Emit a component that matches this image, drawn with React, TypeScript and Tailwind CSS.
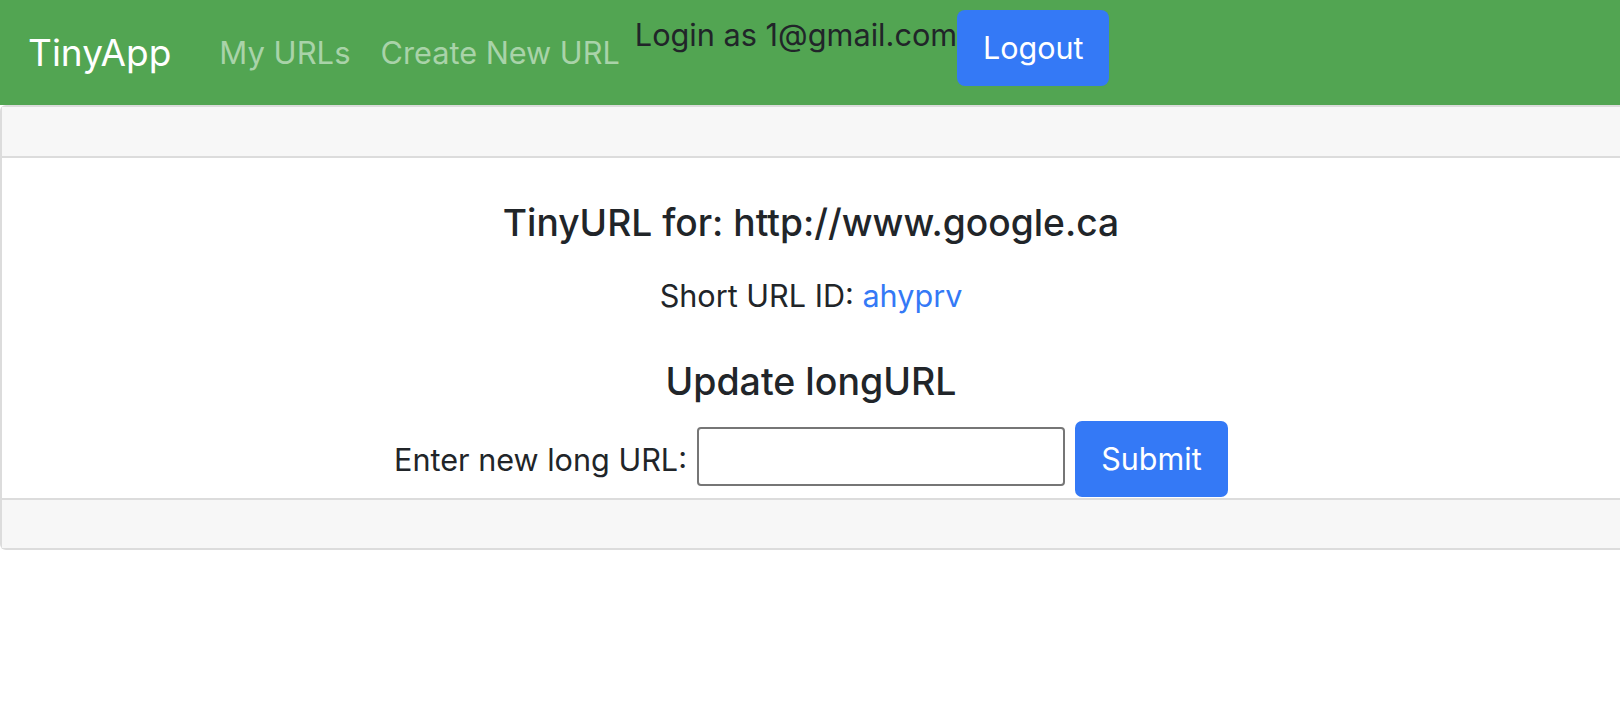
export default function App() {
  return (
    <div className="min-h-screen overflow-hidden bg-white text-[#212529] font-[family-name:Inter,'Noto_Sans',sans-serif]">
      <nav className="flex h-[105px] items-center bg-[#52a552] pl-[28px]">
        <span className="mr-[33px] text-[37px] leading-[45px] text-white">TinyApp</span>
        <a className="px-[15px] text-[31px] leading-[45px] text-[#a9d3a9]">My URLs</a>
        <a className="px-[15px] text-[30.7px] leading-[45px] text-[#a9d3a9]">Create New URL</a>
        <span className="mt-[12px] self-start text-[30.7px] leading-[45px] text-[#212529]">
          Login as 1@gmail.com
        </span>
        <button className="mt-[10px] h-[76px] w-[152px] self-start rounded-[8px] bg-[#3479f6] text-[30.5px] text-white">
          Logout
        </button>
      </nav>
      <div className="rounded-l-[6px] border-y-2 border-l-2 border-[#dcdcdc]">
        <div className="h-[51px] border-b-2 border-[#dcdcdc] bg-[#f7f7f7]" />
        <div className="flex h-[340px] flex-col items-center pt-[42px]">
          <h5 className="text-[37.2px] font-medium leading-[45px]">TinyURL for: http://www.google.ca</h5>
          <p className="mt-[28px] text-[30.6px] leading-[45px]">
            Short URL ID: <a className="text-[#3479f6]">ahyprv</a>
          </p>
          <h5 className="mt-[41px] text-[37.5px] font-medium leading-[45px]">Update longURL</h5>
          <form className="mt-[17px] flex items-center">
            <label className="text-[30.6px] leading-[45px]">Enter new long URL:</label>
            <input
              type="text"
              className="mb-[6px] ml-[10px] h-[59px] w-[368px] rounded-[4px] border-2 border-[#767676] bg-white px-2 text-[30px]"
            />
            <button
              type="button"
              className="ml-[10px] h-[76px] w-[153px] rounded-[7px] bg-[#3479f6] text-[30.5px] text-white"
            >
              Submit
            </button>
          </form>
        </div>
        <div className="h-[50px] border-t-2 border-[#dcdcdc] bg-[#f7f7f7]" />
      </div>
    </div>
  );
}
